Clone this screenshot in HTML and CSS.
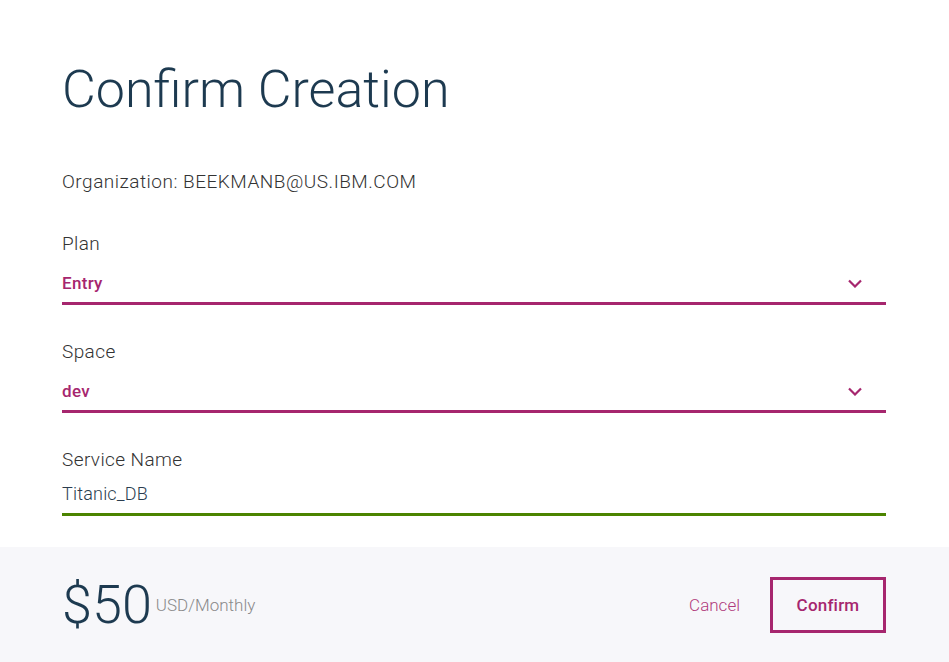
FILE: index.html
```html
<!DOCTYPE html>
<html>
<head>
<meta charset="utf-8">
<link rel="stylesheet" href="styles.css">
</head>
<body>
<div class="modal">
  <main class="body">
    <h1 class="title">Confirm Creation</h1>
    <p class="org">Organization: BEEKMANB@US.IBM.COM</p>
    <div class="field">
      <div class="label">Plan</div>
      <div class="select">
        <span class="value">Entry</span>
        <svg class="chev" width="14" height="9" viewBox="0 0 14 9"><path d="M1 1.5 L7 7.5 L13 1.5" fill="none" stroke="#a6266e" stroke-width="2.2"/></svg>
      </div>
    </div>
    <div class="field">
      <div class="label">Space</div>
      <div class="select">
        <span class="value">dev</span>
        <svg class="chev" width="14" height="9" viewBox="0 0 14 9"><path d="M1 1.5 L7 7.5 L13 1.5" fill="none" stroke="#a6266e" stroke-width="2.2"/></svg>
      </div>
    </div>
    <div class="field">
      <div class="label">Service Name</div>
      <div class="input">Titanic_DB</div>
    </div>
  </main>
  <footer class="footer">
    <div class="price">
      <span class="amount">$50</span>
      <span class="unit">USD/Monthly</span>
    </div>
    <div class="actions">
      <button class="cancel">Cancel</button>
      <button class="confirm">Confirm</button>
    </div>
  </footer>
</div>
</body>
</html>
```

FILE: styles.css
```css
html, body {
  margin: 0;
  padding: 0;
  background: #ffffff;
}
body {
  font-family: Roboto, "Liberation Sans", sans-serif;
  font-weight: 300;
  width: 949px;
  height: 662px;
  overflow: hidden;
}
.modal {
  display: flex;
  flex-direction: column;
  height: 662px;
}
.body {
  padding: 0 63px 0 62px;
  height: 547px;
  box-sizing: border-box;
}
.title {
  margin: 0;
  padding-top: 58px;
  font-size: 52px;
  font-weight: 300;
  line-height: 64px;
  color: #1d3a50;
}
.org {
  margin: 49px 0 0;
  font-size: 19px;
  letter-spacing: 0.5px;
  line-height: 22px;
  color: #333333;
}
.field {
  margin-top: 40px;
}
.field + .field {
  margin-top: 36px;
}
.label {
  font-size: 19px;
  letter-spacing: 0.4px;
  line-height: 22px;
  color: #333333;
}
.select {
  display: flex;
  justify-content: space-between;
  align-items: center;
  margin-top: 16px;
  height: 24px;
  padding-bottom: 7px;
  border-bottom: 3px solid #a6266e;
}
.value {
  font-size: 17px;
  letter-spacing: 0.3px;
  font-weight: 500;
  color: #a6266e;
}
.chev {
  margin-right: 24px;
}
.input {
  margin-top: 11px;
  height: 24px;
  padding-bottom: 7px;
  line-height: 24px;
  font-size: 18px;
  letter-spacing: 0.2px;
  font-weight: 300;
  color: #2b3d4f;
  border-bottom: 3px solid #4b8400;
}
.footer {
  flex: 1;
  background: #f7f7fa;
  display: flex;
  justify-content: space-between;
  align-items: center;
  padding: 0 63px 0 62px;
}
.price {
  display: flex;
  align-items: center;
  gap: 4px;
}
.amount {
  font-size: 54px;
  line-height: 60px;
  font-weight: 300;
  color: #1d3a50;
}
.unit {
  font-size: 17px;
  color: #8a8a8a;
  margin-top: 0;
}
.actions {
  display: flex;
  align-items: center;
  gap: 30px;
}
button {
  font-family: inherit;
  background: none;
  cursor: pointer;
}
.cancel {
  border: none;
  padding: 0;
  font-size: 17px;
  font-weight: 300;
  color: #b03a7c;
}
.confirm {
  width: 116px;
  height: 56px;
  border: 3px solid #a6266e;
  font-size: 17px;
  letter-spacing: 0.2px;
  font-weight: 500;
  color: #a6266e;
}
```
